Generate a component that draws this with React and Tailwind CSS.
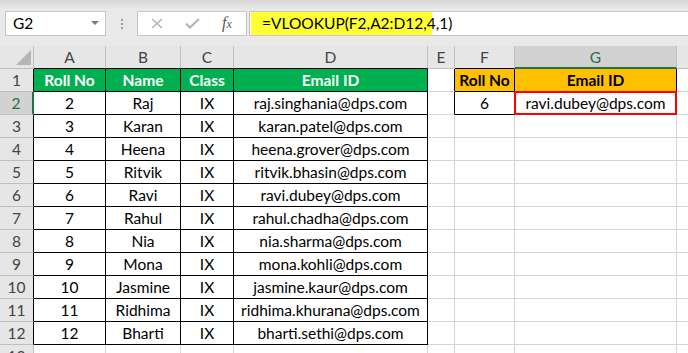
import React from "react";

const COLS = ["A", "B", "C", "D", "E", "F", "G", "H"];
const WIDTHS = "grid-cols-[34px_72px_75px_53px_194px_27px_60px_162px_11px]";

const DATA = [
  ["2", "Raj", "IX", "raj.singhania@dps.com"],
  ["3", "Karan", "IX", "karan.patel@dps.com"],
  ["4", "Heena", "IX", "heena.grover@dps.com"],
  ["5", "Ritvik", "IX", "ritvik.bhasin@dps.com"],
  ["6", "Ravi", "IX", "ravi.dubey@dps.com"],
  ["7", "Rahul", "IX", "rahul.chadha@dps.com"],
  ["8", "Nia", "IX", "nia.sharma@dps.com"],
  ["9", "Mona", "IX", "mona.kohli@dps.com"],
  ["10", "Jasmine", "IX", "jasmine.kaur@dps.com"],
  ["11", "Ridhima", "IX", "ridhima.khurana@dps.com"],
  ["12", "Bharti", "IX", "bharti.sethi@dps.com"],
];

function Cell({ className = "", children }) {
  return (
    <div className={"h-[23px] flex items-center justify-center whitespace-nowrap overflow-visible border-r border-b pt-[2px] " + className}>
      {children}
    </div>
  );
}

export default function App() {
  const rows = [];
  rows.push(
    <div key="corner" className="h-[23px] border-r border-b border-[#bfbfbf] bg-[#e6e6e6] relative">
      <svg className="absolute left-[16px] top-[4px]" width="15" height="15" viewBox="0 0 15 15">
        <polygon points="15,0 15,15 0,15" fill="#b5b5b5" />
      </svg>
    </div>
  );
  COLS.forEach((c) => {
    let cls = "bg-[#e6e6e6] text-[#444] border-[#bfbfbf]";
    if (["A", "B", "C", "D", "F"].includes(c)) cls = "bg-[#e6e6e6] text-[#444] border-r-[#bfbfbf] border-b-black";
    if (c === "G") cls = "bg-[#d2d2d2] text-[#217346] border-r-[#bfbfbf] border-b-2 border-b-[#217346]";
    rows.push(
      <Cell key={"h" + c} className={cls + (c === "H" ? " border-r-0" : "")}>
        {c !== "H" ? c : ""}
      </Cell>
    );
  });

  for (let r = 1; r <= 13; r++) {
    const sel = r === 2;
    const inTable = r <= 12;
    rows.push(
      <Cell
        key={"r" + r}
        className={
          sel
            ? "bg-[#d2d2d2] text-[#217346] border-r-2 border-r-[#217346] border-b-[#bfbfbf]"
            : "bg-[#e6e6e6] text-[#444] border-b-[#bfbfbf] " + (inTable ? "border-r-black" : "border-r-[#bfbfbf]")
        }
      >
        {r}
      </Cell>
    );
    if (r === 1) {
      ["Roll No", "Name", "Class", "Email ID"].forEach((t, i) => {
        rows.push(
          <Cell key={"c1" + i} className="bg-[#00b050] text-white font-bold border-black">
            {t}
          </Cell>
        );
      });
    } else if (r <= 12) {
      DATA[r - 2].forEach((t, i) => {
        rows.push(
          <Cell key={"c" + r + i} className="bg-white text-black border-black">
            {t}
          </Cell>
        );
      });
    } else {
      for (let i = 0; i < 4; i++)
        rows.push(<Cell key={"c" + r + i} className="bg-white border-[#d4d4d4]" />);
    }
    rows.push(
      <Cell
        key={"e" + r}
        className={"bg-white border-b-[#d4d4d4] " + (r <= 2 ? "border-r-black" : "border-r-[#d4d4d4]")}
      />
    );
    if (r === 1) {
      rows.push(
        <Cell key="f1" className="bg-[#ffc000] text-black font-bold border-black">Roll No</Cell>
      );
      rows.push(
        <Cell key="g1" className="bg-[#ffc000] text-black font-bold border-black">Email ID</Cell>
      );
    } else if (r === 2) {
      rows.push(
        <Cell key="f2" className="bg-white text-black border-black">6</Cell>
      );
      rows.push(
        <Cell key="g2" className="bg-white text-black border-[#d4d4d4] relative">
          <div className="absolute left-[-1px] top-[-1px] right-[-1px] bottom-[-1px] border-2 border-[#ff0000]" />
          ravi.dubey@dps.com
        </Cell>
      );
    } else {
      rows.push(<Cell key={"f" + r} className="bg-white border-[#d4d4d4]" />);
      rows.push(<Cell key={"g" + r} className="bg-white border-[#d4d4d4]" />);
    }
    rows.push(<Cell key={"hh" + r} className="bg-white border-[#d4d4d4] border-r-0" />);
  }

  return (
    <div className="w-[688px] h-[353px] overflow-hidden bg-[#e6e6e6] text-[15.5px] leading-none font-['Lato',sans-serif]">
      <div className="h-[46px] bg-[linear-gradient(to_bottom,#d6d6d6_0px,#e9e9e9_9px,#e9e9e9_100%)] flex items-start pt-[11px] pl-[5px]">
        <div className="w-[101px] h-[25px] bg-white border border-[#c6c6c6] flex items-center pl-[7px] pr-[6px] text-black">
          <span className="flex-1 pt-[1px]">G2</span>
          <svg width="8" height="5" viewBox="0 0 8 5"><polygon points="0,0 8,0 4,4" fill="#7a7a7a" /></svg>
        </div>
        <div className="w-[31px] h-[25px] flex flex-col items-center justify-center gap-[2px]">
          <span className="w-[2px] h-[2px] bg-[#a0a0a0]" />
          <span className="w-[2px] h-[2px] bg-[#a0a0a0]" />
          <span className="w-[2px] h-[2px] bg-[#a0a0a0]" />
        </div>
        <div className="w-[110px] h-[25px] bg-white border border-[#c6c6c6] flex items-center">
          <svg className="ml-[13px]" width="12" height="11" viewBox="0 0 12 11">
            <path d="M1 1 L11 10 M11 1 L1 10" stroke="#b3b3b3" strokeWidth="1.5" fill="none" />
          </svg>
          <svg className="ml-[22px]" width="15" height="11" viewBox="0 0 15 11">
            <path d="M1 5.5 L5 9.5 L14 1" stroke="#b3b3b3" strokeWidth="2" fill="none" />
          </svg>
          <span className="ml-[22px] italic text-[#555] font-['Liberation_Serif',serif] text-[16px] pb-[2px]">
            f<span className="text-[12px]">x</span>
          </span>
        </div>
        <div className="flex-1 h-[25px] bg-white border border-[#c6c6c6] border-r-0 ml-[2px] flex items-stretch pl-[1px]">
          <div className="w-[181px] bg-[#ffff33] flex items-center pl-[11px] text-black pt-[1px]">
            =VLOOKUP(F2,A2:D12,4,1)
          </div>
        </div>
      </div>
      <div className={"grid " + WIDTHS}>{rows}</div>
    </div>
  );
}
